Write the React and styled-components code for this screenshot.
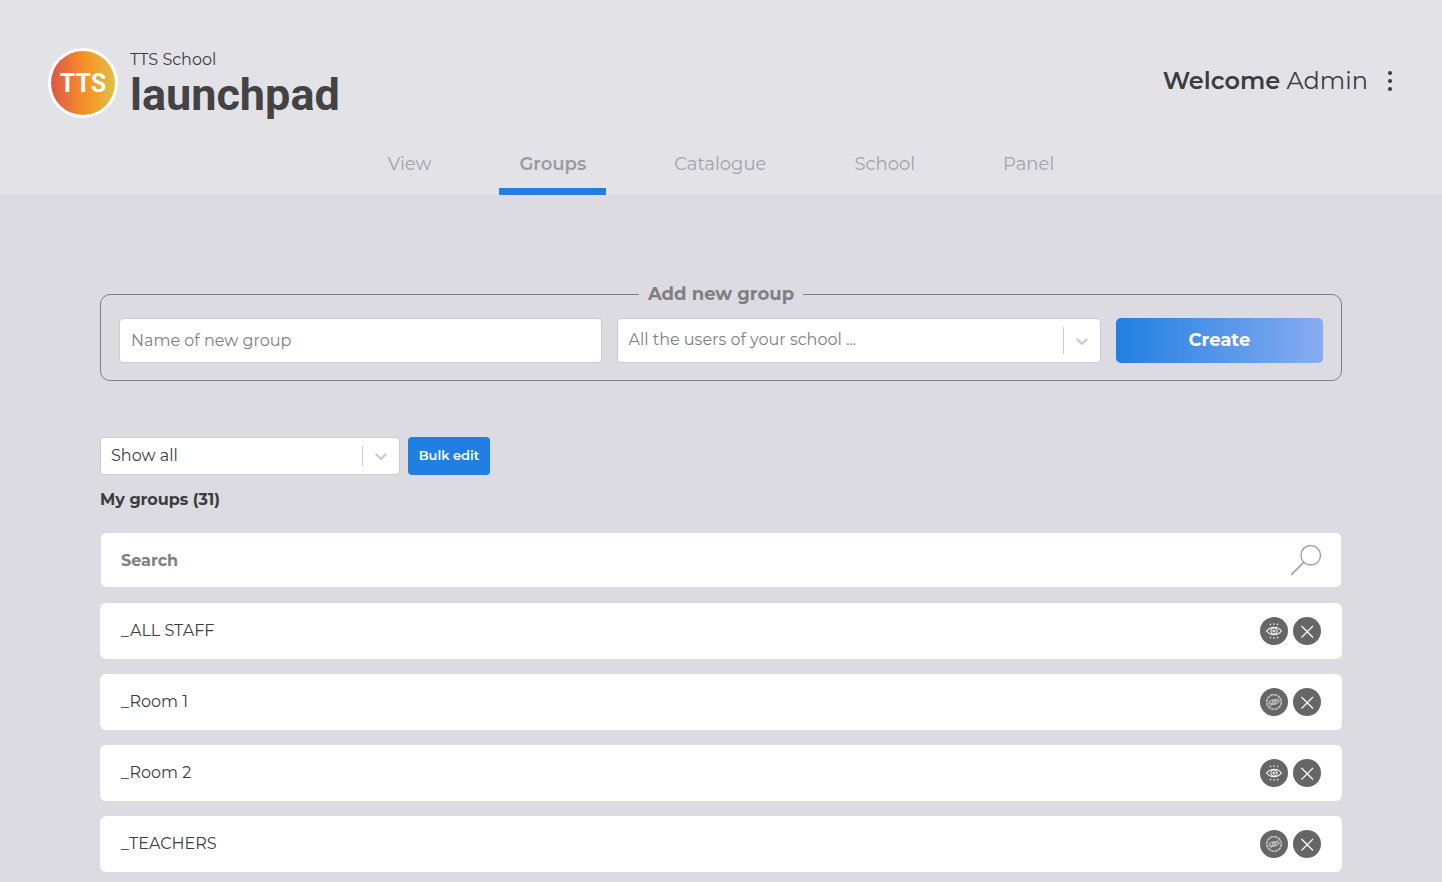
import React from "react";
import styled, { createGlobalStyle } from "styled-components";

const GlobalStyle = createGlobalStyle`
  *, *::before, *::after { box-sizing: border-box; }
  body {
    margin: 0;
    background: #dcdbe1;
    color: #3c3c3f;
    font-family: Montserrat, Inter, "Liberation Sans", sans-serif;
    font-size: 16px;
    line-height: 20px;
  }
  button, input, select { font: inherit; color: inherit; margin: 0; }
`;

const Header = styled.header`
  background: #e3e2e7;
  padding: 48px 48px 0;
`;

const TopBar = styled.div`
  display: flex;
  justify-content: space-between;
  align-items: flex-start;
`;

const Brand = styled.a`
  display: flex;
  gap: 12px;
  color: inherit;
  text-decoration: none;
`;

const BrandText = styled.span`
  display: flex;
  flex-direction: column;
`;

const SchoolName = styled.span`
  font-weight: 400;
  line-height: 24px;
`;

const Wordmark = styled.span`
  font-family: Roboto, "Liberation Sans", sans-serif;
  font-size: 45px;
  font-weight: 700;
  line-height: 46px;
  color: #434346;
`;

const Account = styled.div`
  display: flex;
  align-items: center;
  gap: 18px;
  padding-top: 17px;
`;

const Greeting = styled.span`
  font-size: 24px;
  line-height: 32px;
  font-weight: 400;

  strong { font-weight: 600; }
`;

const MenuButton = styled.button`
  display: flex;
  justify-content: center;
  width: 8px;
  padding: 0;
  border: 0;
  background: none;
`;

const Nav = styled.nav`
  display: flex;
  justify-content: center;
  gap: 48px;
  margin-top: 24px;
`;

const NavLink = styled.a`
  padding: 10px 20px 12px;
  border-bottom: 7px solid ${(p) => (p.$active ? "#217fe3" : "transparent")};
  font-size: 18px;
  line-height: 24px;
  font-weight: ${(p) => (p.$active ? 600 : 400)};
  color: ${(p) => (p.$active ? "#9b9b9f" : "#a3a3a7")};
  text-decoration: none;
`;

const Main = styled.main`
  padding: 88px 100px 10px;
`;

const AddGroup = styled.fieldset`
  margin: 0;
  padding: 13px 18px 17px;
  border: 1px solid #7f7e84;
  border-radius: 10px;
`;

const Legend = styled.legend`
  margin: 0 auto;
  padding: 0 9px;
  font-size: 18px;
  line-height: 22px;
  font-weight: 700;
  color: #7f7e84;
`;

const AddGroupFields = styled.div`
  display: grid;
  grid-template-columns: 7fr 7fr 3fr;
  gap: 15px;
  height: 45px;
`;

const TextField = styled.input`
  width: 100%;
  padding: 0 11px;
  border: 1px solid #cbcad0;
  border-radius: 4px;
  background: #fff;
  font-weight: 400;

  &::placeholder { color: #808083; opacity: 1; }
`;

const SelectBox = styled.div`
  position: relative;
  width: ${(p) => p.$width || "100%"};
  height: ${(p) => p.$height};
`;

const Select = styled.select`
  width: 100%;
  height: 100%;
  padding: 0 44px 1px 10px;
  border: 1px solid #cbcad0;
  border-radius: 4px;
  background: #fff;
  appearance: none;
  font-weight: 400;
  color: ${(p) => (p.$muted ? "#808083" : "#3c3c3f")};
`;

const SelectArrow = styled.span`
  position: absolute;
  top: 9px;
  right: 1px;
  bottom: 9px;
  display: flex;
  align-items: center;
  justify-content: center;
  width: 37px;
  border-left: 1px solid #cccccc;
  color: #cccccc;
  pointer-events: none;
`;

const CreateButton = styled.button`
  padding: 0 0 2px;
  border: 0;
  border-radius: 5px;
  background: linear-gradient(90deg, #217fe3, #88acf0);
  font-size: 18px;
  font-weight: 700;
  color: #fff;
`;

const Filters = styled.div`
  display: flex;
  gap: 8px;
  margin-top: 56px;
`;

const BulkButton = styled.button`
  width: 82px;
  padding: 0 0 2px;
  border: 0;
  border-radius: 4px;
  background: #217fe3;
  font-size: 13px;
  font-weight: 600;
  color: #fff;
`;

const Heading = styled.h2`
  margin: 15px 0 23px;
  font-size: 16px;
  line-height: 20px;
  font-weight: 700;
`;

const SearchBar = styled.label`
  display: flex;
  align-items: center;
  height: 54px;
  margin: 0 1px;
  padding: 0 19px 0 20px;
  border-radius: 5px;
  background: #fff;
`;

const SearchInput = styled.input`
  flex: 1;
  min-width: 0;
  padding: 2px 0 0;
  border: 0;
  outline: 0;
  background: none;
  font-weight: 700;

  &::placeholder { color: #808083; opacity: 1; }
`;

const GroupList = styled.ul`
  display: flex;
  flex-direction: column;
  gap: 15px;
  margin: 16px 0 0;
  padding: 0;
  list-style: none;
`;

const GroupRow = styled.li`
  display: flex;
  align-items: center;
  gap: 5px;
  height: 56px;
  padding: 0 21px;
  border-radius: 6px;
  background: #fff;
`;

const GroupName = styled.span`
  flex: 1;
  font-weight: 400;
`;

const RoundButton = styled.button`
  display: flex;
  width: 28px;
  height: 28px;
  padding: 0;
  border: 0;
  border-radius: 50%;
  background: #666666;
  color: #fff;
`;

const Logo = () => (
  <svg width="70" height="70" viewBox="0 0 70 70" aria-hidden="true">
    <defs>
      <linearGradient id="logoFill">
        <stop offset="0" stopColor="#dc5646" />
        <stop offset="0.55" stopColor="#f79426" />
        <stop offset="1" stopColor="#dfbf45" />
      </linearGradient>
    </defs>
    <circle cx="35" cy="35" r="35" fill="#fff" />
    <circle cx="35" cy="35" r="32" fill="url(#logoFill)" />
    <text x="35" y="44" textAnchor="middle" fill="#fff" fontFamily="Roboto, sans-serif" fontSize="25" fontWeight="700">
      TTS
    </text>
  </svg>
);

const DotsIcon = () => (
  <svg width="6" height="22" viewBox="0 0 6 22" fill="#3c3c3f" aria-hidden="true">
    <circle cx="3" cy="3" r="2.100" />
    <circle cx="3" cy="11" r="2.100" />
    <circle cx="3" cy="19" r="2.100" />
  </svg>
);

const ChevronIcon = () => (
  <svg width="20" height="20" viewBox="0 0 20 20" fill="currentColor" aria-hidden="true">
    <path d="M4.516 7.548c0.436-0.446 1.043-0.481 1.576 0l3.908 3.747 3.908-3.747c0.533-0.481 1.141-0.446 1.574 0 0.436 0.445 0.408 1.197 0 1.615-0.406 0.418-4.695 4.502-4.695 4.502-0.217 0.223-0.502 0.335-0.787 0.335s-0.57-0.112-0.789-0.335c0 0-4.287-4.084-4.695-4.502s-0.436-1.17 0-1.615z" />
  </svg>
);

const SearchIcon = () => (
  <svg width="32" height="32" viewBox="0 0 32 32" fill="none" stroke="#a3a3a5" aria-hidden="true">
    <circle cx="20.700" cy="11.300" r="9.800" strokeWidth="1.500" />
    <path d="M13.600 18.400 1.200 30.800" strokeWidth="1.700" />
  </svg>
);

const EyeIcon = () => (
  <svg width="28" height="28" viewBox="0 0 28 28" fill="none" stroke="currentColor" aria-hidden="true">
    <path d="M6.500 14C9 10.900 11.500 10.300 14 10.300s5 .6 7.500 3.700C19 17.100 16.500 17.700 14 17.700s-5-.6-7.500-3.700z" strokeWidth="1.100" />
    <circle cx="14" cy="14" r="3.200" />
    <circle cx="14" cy="14" r="1.100" />
    <path d="M14 6.200v1.500M10.200 6.700l.5 1.400M17.800 6.700l-.5 1.400M14 20.300v1.500M10.200 21.300l.5-1.400M17.800 21.300l-.5-1.400" strokeWidth="1.200" />
  </svg>
);

const EyeOffIcon = () => (
  <svg width="28" height="28" viewBox="0 0 28 28" fill="none" stroke="#bdbdbd" aria-hidden="true">
    <circle cx="14" cy="14" r="7.300" strokeWidth="1.700" strokeDasharray="3.200 .6" />
    <path d="M8.800 14.500c2-2.500 3.700-3 5.200-3s3.500 0 5.200 2c-2 2.500-3.700 3-5.200 3s-3.500 0-5.200-2z" strokeWidth="1.200" />
    <circle cx="14" cy="14" r="1.600" strokeWidth="1.300" />
    <path d="M8.500 17.500 18.500 9.800M9.600 18.800 19.500 11" strokeWidth=".9" />
  </svg>
);

const CloseIcon = () => (
  <svg width="28" height="28" viewBox="0 0 28 28" fill="none" stroke="currentColor" strokeWidth="1.200" aria-hidden="true">
    <path d="M8.500 9 20 20.500M20 9 8.500 20.500" />
  </svg>
);

const tabs = ["View", "Groups", "Catalogue", "School", "Panel"];

const groups = [
  { name: "_ALL STAFF", visible: true },
  { name: "_Room 1", visible: false },
  { name: "_Room 2", visible: true },
  { name: "_TEACHERS", visible: false },
];

export default function App() {
  return (
    <>
      <GlobalStyle />
      <Header>
        <TopBar>
          <Brand href="#home">
            <Logo />
            <BrandText>
              <SchoolName>TTS School</SchoolName>
              <Wordmark>launchpad</Wordmark>
            </BrandText>
          </Brand>
          <Account>
            <Greeting>
              <strong>Welcome</strong> Admin
            </Greeting>
            <MenuButton type="button" aria-label="Menu">
              <DotsIcon />
            </MenuButton>
          </Account>
        </TopBar>
        <Nav>
          {tabs.map((tab) => (
            <NavLink key={tab} href={`#${tab.toLowerCase()}`} $active={tab === "Groups"}>
              {tab}
            </NavLink>
          ))}
        </Nav>
      </Header>
      <Main>
        <AddGroup>
          <Legend>Add new group</Legend>
          <AddGroupFields>
            <TextField type="text" placeholder="Name of new group" aria-label="Name of new group" />
            <SelectBox $height="45px">
              <Select $muted aria-label="Users">
                <option>All the users of your school ...</option>
              </Select>
              <SelectArrow>
                <ChevronIcon />
              </SelectArrow>
            </SelectBox>
            <CreateButton type="button">Create</CreateButton>
          </AddGroupFields>
        </AddGroup>
        <Filters>
          <SelectBox $width="300px" $height="38px">
            <Select aria-label="Filter groups">
              <option>Show all</option>
            </Select>
            <SelectArrow>
              <ChevronIcon />
            </SelectArrow>
          </SelectBox>
          <BulkButton type="button">Bulk edit</BulkButton>
        </Filters>
        <Heading>My groups (31)</Heading>
        <SearchBar>
          <SearchInput type="text" placeholder="Search" aria-label="Search" />
          <SearchIcon />
        </SearchBar>
        <GroupList>
          {groups.map((group) => (
            <GroupRow key={group.name}>
              <GroupName>{group.name}</GroupName>
              <RoundButton type="button" aria-label={group.visible ? "Hide group" : "Show group"}>
                {group.visible ? <EyeIcon /> : <EyeOffIcon />}
              </RoundButton>
              <RoundButton type="button" aria-label="Delete group">
                <CloseIcon />
              </RoundButton>
            </GroupRow>
          ))}
        </GroupList>
      </Main>
    </>
  );
}
